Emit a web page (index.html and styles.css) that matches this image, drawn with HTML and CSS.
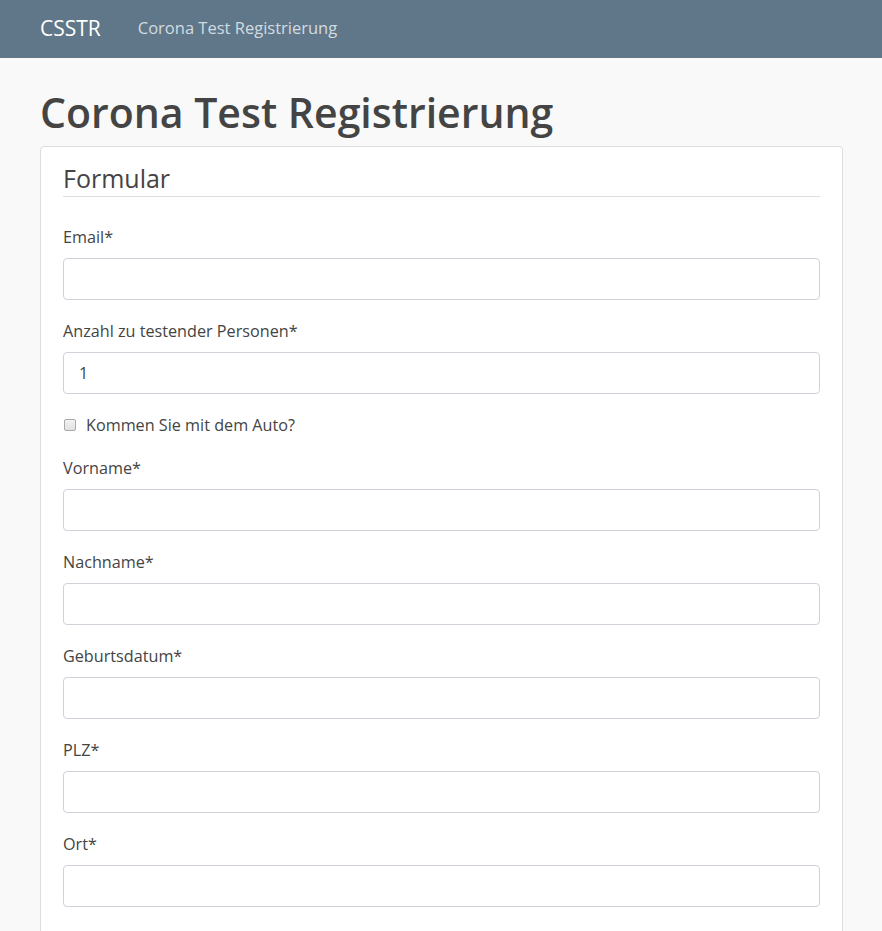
FILE: index.html
```html
<!DOCTYPE html>
<html lang="de">
<head>
<meta charset="utf-8">
<title>CSSTR</title>
<link rel="stylesheet" href="styles.css">
</head>
<body>
<nav class="navbar">
  <a class="brand" href="#">CSSTR</a>
  <a class="nav-link" href="#">Corona Test Registrierung</a>
</nav>
<main class="container">
  <h1 class="title">Corona Test Registrierung</h1>
  <section class="card">
    <h2 class="card-title">Formular</h2>
    <form class="form">
      <div class="group">
        <label class="label">Email*</label>
        <input class="input" type="email">
      </div>
      <div class="group">
        <label class="label">Anzahl zu testender Personen*</label>
        <input class="input" type="text" value="1">
      </div>
      <div class="group check-group">
        <input class="check" type="checkbox" id="auto">
        <label class="check-label" for="auto">Kommen Sie mit dem Auto?</label>
      </div>
      <div class="group">
        <label class="label">Vorname*</label>
        <input class="input" type="text">
      </div>
      <div class="group">
        <label class="label">Nachname*</label>
        <input class="input" type="text">
      </div>
      <div class="group">
        <label class="label">Geburtsdatum*</label>
        <input class="input" type="text">
      </div>
      <div class="group">
        <label class="label">PLZ*</label>
        <input class="input" type="text">
      </div>
      <div class="group">
        <label class="label">Ort*</label>
        <input class="input" type="text">
      </div>
      <div class="group">
        <label class="label">Telefon*</label>
        <input class="input" type="text">
      </div>
    </form>
  </section>
</main>
</body>
</html>
```
FILE: styles.css
```css
* { box-sizing: border-box; }
html, body { margin: 0; padding: 0; }
body {
  background: #f9f9f9;
  font-family: "Open Sans", "Noto Sans", sans-serif;
  color: #444;
  font-size: 16px;
}
.navbar {
  height: 58px;
  background: #5f7788;
  display: flex;
  align-items: center;
  padding: 0 40px 3px;
  gap: 37px;
}
.brand {
  color: #fff;
  font-size: 21px;
  text-decoration: none;
}
.nav-link {
  color: #d3dbe2;
  font-size: 16.5px;
  text-decoration: none;
}
.container {
  padding: 0 39px 0 40px;
}
.title {
  margin: 30px 0 10px;
  font-size: 41px;
  font-weight: 600;
  line-height: 48px;
  color: #444;
}
.card {
  background: #fff;
  border: 1px solid #ddd;
  border-radius: 4px;
  padding: 13px 22px 22px;
}
.card-title {
  margin: 0 0 28px;
  font-size: 25px;
  font-weight: 400;
  line-height: 36px;
  border-bottom: 1px solid #dedede;
}
.group {
  display: flex;
  flex-direction: column;
  margin-bottom: 19px;
}
.label {
  line-height: 24px;
  margin-bottom: 9px;
  font-size: 16.2px;
}
.input {
  height: 42px;
  border: 1px solid #cfd2d8;
  border-radius: 4px;
  padding: 6px 15px;
  font-family: inherit;
  font-size: 16px;
  color: #444;
  background: #fff;
}
.check-group {
  flex-direction: row;
  align-items: center;
  height: 24px;
}
.check {
  appearance: none;
  -webkit-appearance: none;
  margin: 0 10px 0 1px;
  width: 12px;
  height: 12px;
  border: 1px solid #a9a9a9;
  border-radius: 2px;
  background: linear-gradient(#f2f2f2, #e2e2e2);
}
.check-label {
  line-height: 24px;
  font-size: 16.2px;
}
```
